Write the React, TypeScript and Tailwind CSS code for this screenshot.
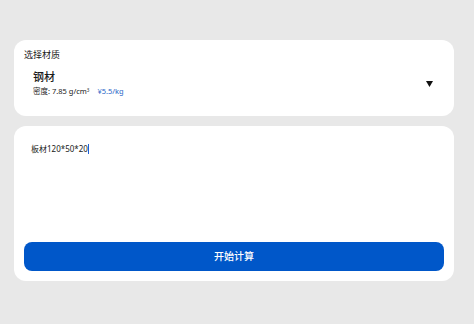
export default function App() {
  return (
    <div
      className="w-[474px] h-[324px] bg-[#e8e8e8] pl-[14px] pt-[40px] flex flex-col gap-[10px] text-[#1a1a1a]"
      style={{ fontFamily: '"Noto Sans", "Noto Sans CJK SC", sans-serif' }}
    >
      {/* material picker */}
      <div className="w-[440px] h-[76px] bg-white rounded-[12px] px-[10px] pt-[8px]">
        <p className="text-[9px] leading-[13px]">选择材质</p>
        <div className="flex items-center justify-between pl-[9px] pr-[11px] mt-[8px]">
          <div>
            <p className="text-[11px] leading-[16px] font-medium">钢材</p>
            <p className="text-[7.5px] leading-[12px] flex gap-[8px]">
              <span>
                密度: 7.85 g/cm<sup className="text-[4.5px]">3</sup>
              </span>
              <span className="text-[#2a66c8]">¥5.5/kg</span>
            </p>
          </div>
          <svg width="7" height="6" viewBox="0 0 7 6" className="mt-[1px]">
            <path d="M0 0H7L3.5 6Z" fill="#111" />
          </svg>
        </div>
      </div>

      {/* input + action */}
      <div className="w-[440px] h-[155px] bg-white rounded-[12px] p-[10px] flex flex-col">
        <div className="flex-1 px-[7px] pt-[7px]">
          <p className="text-[8px] leading-[12px] flex items-center">
            板材120*50*20
            <span className="inline-block w-[1px] h-[10px] bg-[#1f5fd6]" />
          </p>
        </div>
        <button className="h-[29px] w-full rounded-[8px] bg-[#0057c9] text-white text-[10px] font-medium">
          开始计算
        </button>
      </div>
    </div>
  )
}
